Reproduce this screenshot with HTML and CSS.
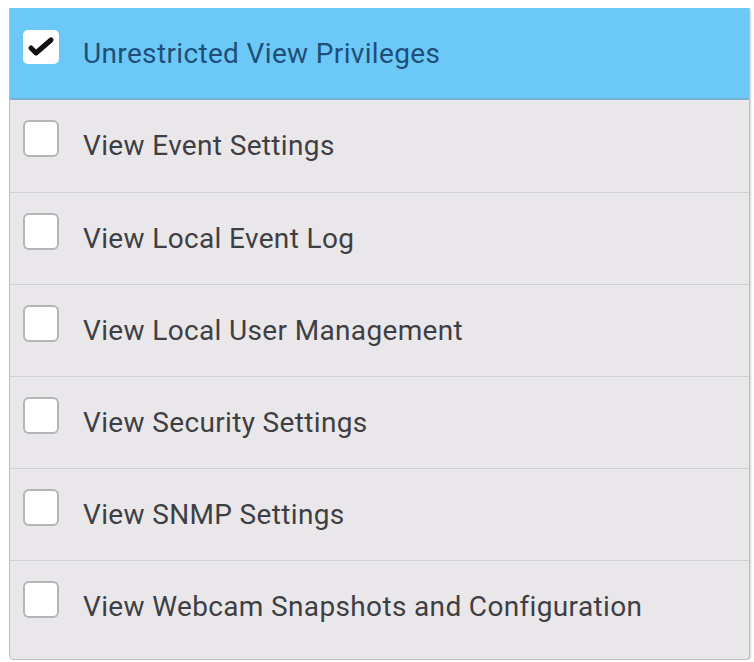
FILE: index.html
```html
<!DOCTYPE html>
<html lang="en">

<head>
    <meta charset="UTF-8">
    <meta name="viewport" content="width=device-width, initial-scale=1.0">
    <title>Privileges</title>
    <link rel="stylesheet" href="styles.css">
</head>

<body>
    <ul class="priv-list">
        <li class="priv-item selected">
            <span class="check checked">
                <svg viewBox="0 0 36 34" width="36" height="34"><path d="M8 18 L13 23 L28 10" fill="none" stroke="#111" stroke-width="5" stroke-linecap="round" stroke-linejoin="round"/></svg>
            </span>
            <span class="label">Unrestricted View Privileges</span>
        </li>
        <li class="priv-item">
            <span class="check"></span>
            <span class="label">View Event Settings</span>
        </li>
        <li class="priv-item">
            <span class="check"></span>
            <span class="label">View Local Event Log</span>
        </li>
        <li class="priv-item">
            <span class="check"></span>
            <span class="label">View Local User Management</span>
        </li>
        <li class="priv-item">
            <span class="check"></span>
            <span class="label">View Security Settings</span>
        </li>
        <li class="priv-item">
            <span class="check"></span>
            <span class="label">View SNMP Settings</span>
        </li>
        <li class="priv-item">
            <span class="check"></span>
            <span class="label">View Webcam Snapshots and Configuration</span>
        </li>
    </ul>
</body>

</html>
```

FILE: styles.css
```css
* {
    padding: 0;
    margin: 0;
    box-sizing: border-box;
}

body {
    background-color: #fff;
    font-family: Roboto, "Liberation Sans", sans-serif;
}

li {
    list-style: none;
}

.priv-list {
    width: 741px;
    margin: 8px 0 0 9px;
    border: 1px solid #bdbcbe;
    border-top: none;
    border-radius: 0 0 5px 5px;
    box-shadow: 1px 1px 2px rgba(0, 0, 0, 0.18);
    overflow: hidden;
    background-color: #e9e7ea;
}

.priv-item {
    height: 92px;
    display: flex;
    align-items: flex-start;
    padding: 20px 0 0 13px;
    border-top: 1px solid #d0cfd2;
    color: #3f3f43;
}

.priv-item:first-child {
    border-top: none;
}

.priv-item:last-child {
    height: 99px;
}

.priv-item.selected {
    background-color: #6cc9f7;
    border-bottom: 2px solid #78b2d2;
    color: #1f4f78;
}

.priv-item.selected + .priv-item {
    border-top: none;
}

.check {
    width: 36px;
    height: 37px;
    flex: none;
    border: 2px solid #b5b4b7;
    border-radius: 6px;
    background-color: #fff;
}

.check.checked {
    width: 36px;
    height: 34px;
    border: none;
    border-radius: 5px;
    margin-top: 2px;
}

.check svg {
    display: block;
}

.label {
    margin: 8px 0 0 24px;
    font-size: 28px;
    line-height: 36px;
    letter-spacing: 0.35px;
}
```
